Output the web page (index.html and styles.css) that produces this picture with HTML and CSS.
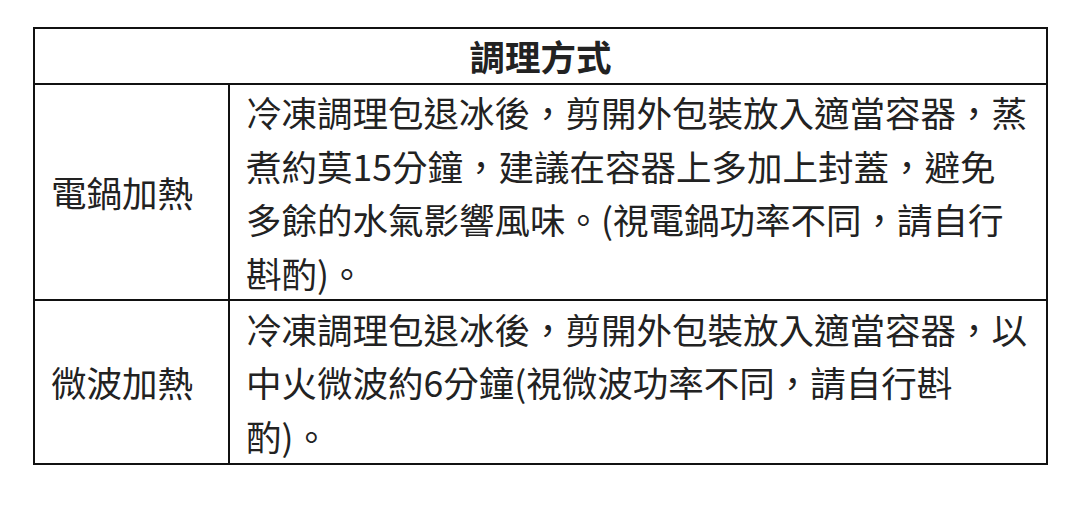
FILE: index.html
```html
<!DOCTYPE html>
<html lang="zh-Hant">
<head>
<meta charset="utf-8">
<link rel="stylesheet" href="styles.css">
</head>
<body>
<table class="cook">
  <thead>
    <tr><th colspan="2" class="head">調理方式</th></tr>
  </thead>
  <tbody>
    <tr class="row-one">
      <td class="label">電鍋加熱</td>
      <td class="desc">冷凍調理包退冰後，剪開外包裝放入適當容器，蒸<br>煮約莫15分鐘，建議在容器上多加上封蓋，避免<br>多餘的水氣影響風味。(視電鍋功率不同，請自行<br>斟酌)。</td>
    </tr>
    <tr class="row-two">
      <td class="label">微波加熱</td>
      <td class="desc">冷凍調理包退冰後，剪開外包裝放入適當容器，以<br>中火微波約6分鐘(視微波功率不同，請自行斟<br>酌)。</td>
    </tr>
  </tbody>
</table>
</body>
</html>
```

FILE: styles.css
```css
html, body {
  margin: 0;
  padding: 0;
  background: #ffffff;
}
body {
  padding: 27px 0 0 33px;
  font-family: "Noto Sans CJK TC", "Noto Sans", sans-serif;
  color: #222222;
}
.cook {
  border-collapse: collapse;
  width: 1015px;
  font-size: 35.5px;
  line-height: 53.5px;
}
.cook th, .cook td {
  border: 2px solid #111111;
  padding: 0;
  vertical-align: middle;
}
.head {
  height: 54px;
  font-weight: 700;
  text-align: center;
}
.label {
  width: 177px;
  padding-left: 16px !important;
  text-align: left;
}
.desc {
  padding-left: 16px !important;
  text-align: left;
  white-space: nowrap;
}
.row-one .desc {
  height: 212px;
}
.row-two .desc {
  height: 162px;
}
```
